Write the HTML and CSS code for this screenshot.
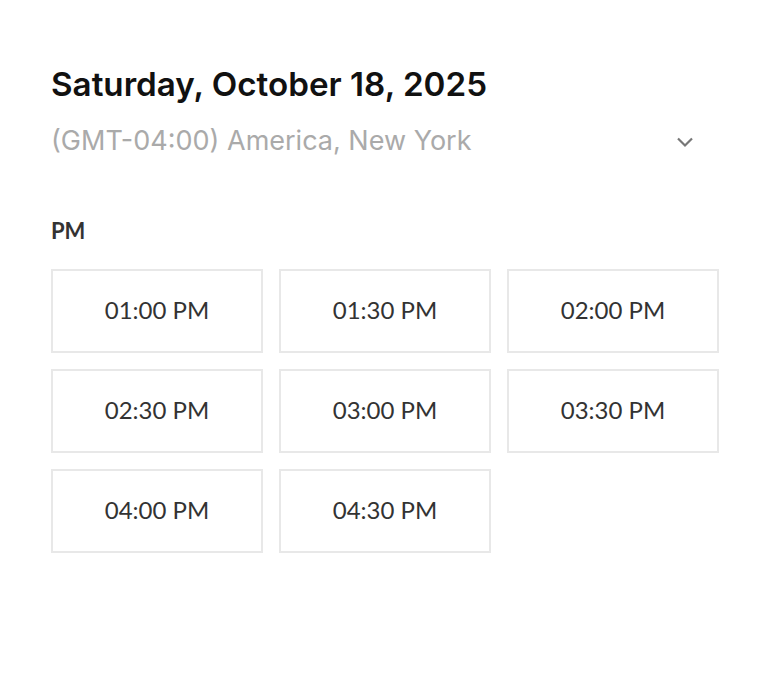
FILE: index.html
```html
<!DOCTYPE html>
<html lang="en">
<head>
    <meta charset="UTF-8">
    <meta name="viewport" content="width=device-width, initial-scale=1.0">
    <title>Select a time</title>
    <link rel="stylesheet" href="styles.css">
</head>
<body>
    <div class="picker">
        <h2 class="date">Saturday, October 18, 2025</h2>
        <div class="timezone">
            <span>(GMT-04:00) America, New York</span>
            <svg class="chevron" width="18" height="12" viewBox="0 0 18 12">
                <path d="M2 2.5 L9 9.5 L16 2.5" fill="none" stroke="#777" stroke-width="2.2"/>
            </svg>
        </div>

        <div class="period">PM</div>
        <div class="slots">
            <button class="slot">01:00 PM</button>
            <button class="slot">01:30 PM</button>
            <button class="slot">02:00 PM</button>
            <button class="slot">02:30 PM</button>
            <button class="slot">03:00 PM</button>
            <button class="slot">03:30 PM</button>
            <button class="slot">04:00 PM</button>
            <button class="slot">04:30 PM</button>
        </div>
    </div>
</body>
</html>
```

FILE: styles.css
```css
body {
    margin: 0;
    font-family: Lato, 'Noto Sans', sans-serif;
    background: #fff;
    color: #222;
}

.picker {
    padding: 64px 59px 0 51px;
}

.date {
    margin: 0;
    font-family: Inter, Lato, sans-serif;
    font-size: 33.2px;
    font-weight: 600;
    line-height: 40px;
    color: #111;
}

.timezone {
    display: flex;
    align-items: center;
    justify-content: space-between;
    margin-top: 21px;
    padding-right: 25px;
    font-family: Inter, Lato, sans-serif;
    font-size: 27px;
    line-height: 32px;
    color: #aaa;
}

.chevron {
    margin-top: 2px;
}

.period {
    margin-top: 62px;
    font-size: 22px;
    font-weight: 700;
    line-height: 24px;
    color: #333;
}

.slots {
    display: grid;
    grid-template-columns: repeat(3, 212px);
    grid-auto-rows: 84px;
    gap: 16px;
    margin-top: 26px;
}

.slot {
    background: #fff;
    border: 2px solid #e8e8e8;
    padding: 0 0 3px;
    font-family: inherit;
    font-size: 24px;
    color: #333;
    cursor: pointer;
}
```
